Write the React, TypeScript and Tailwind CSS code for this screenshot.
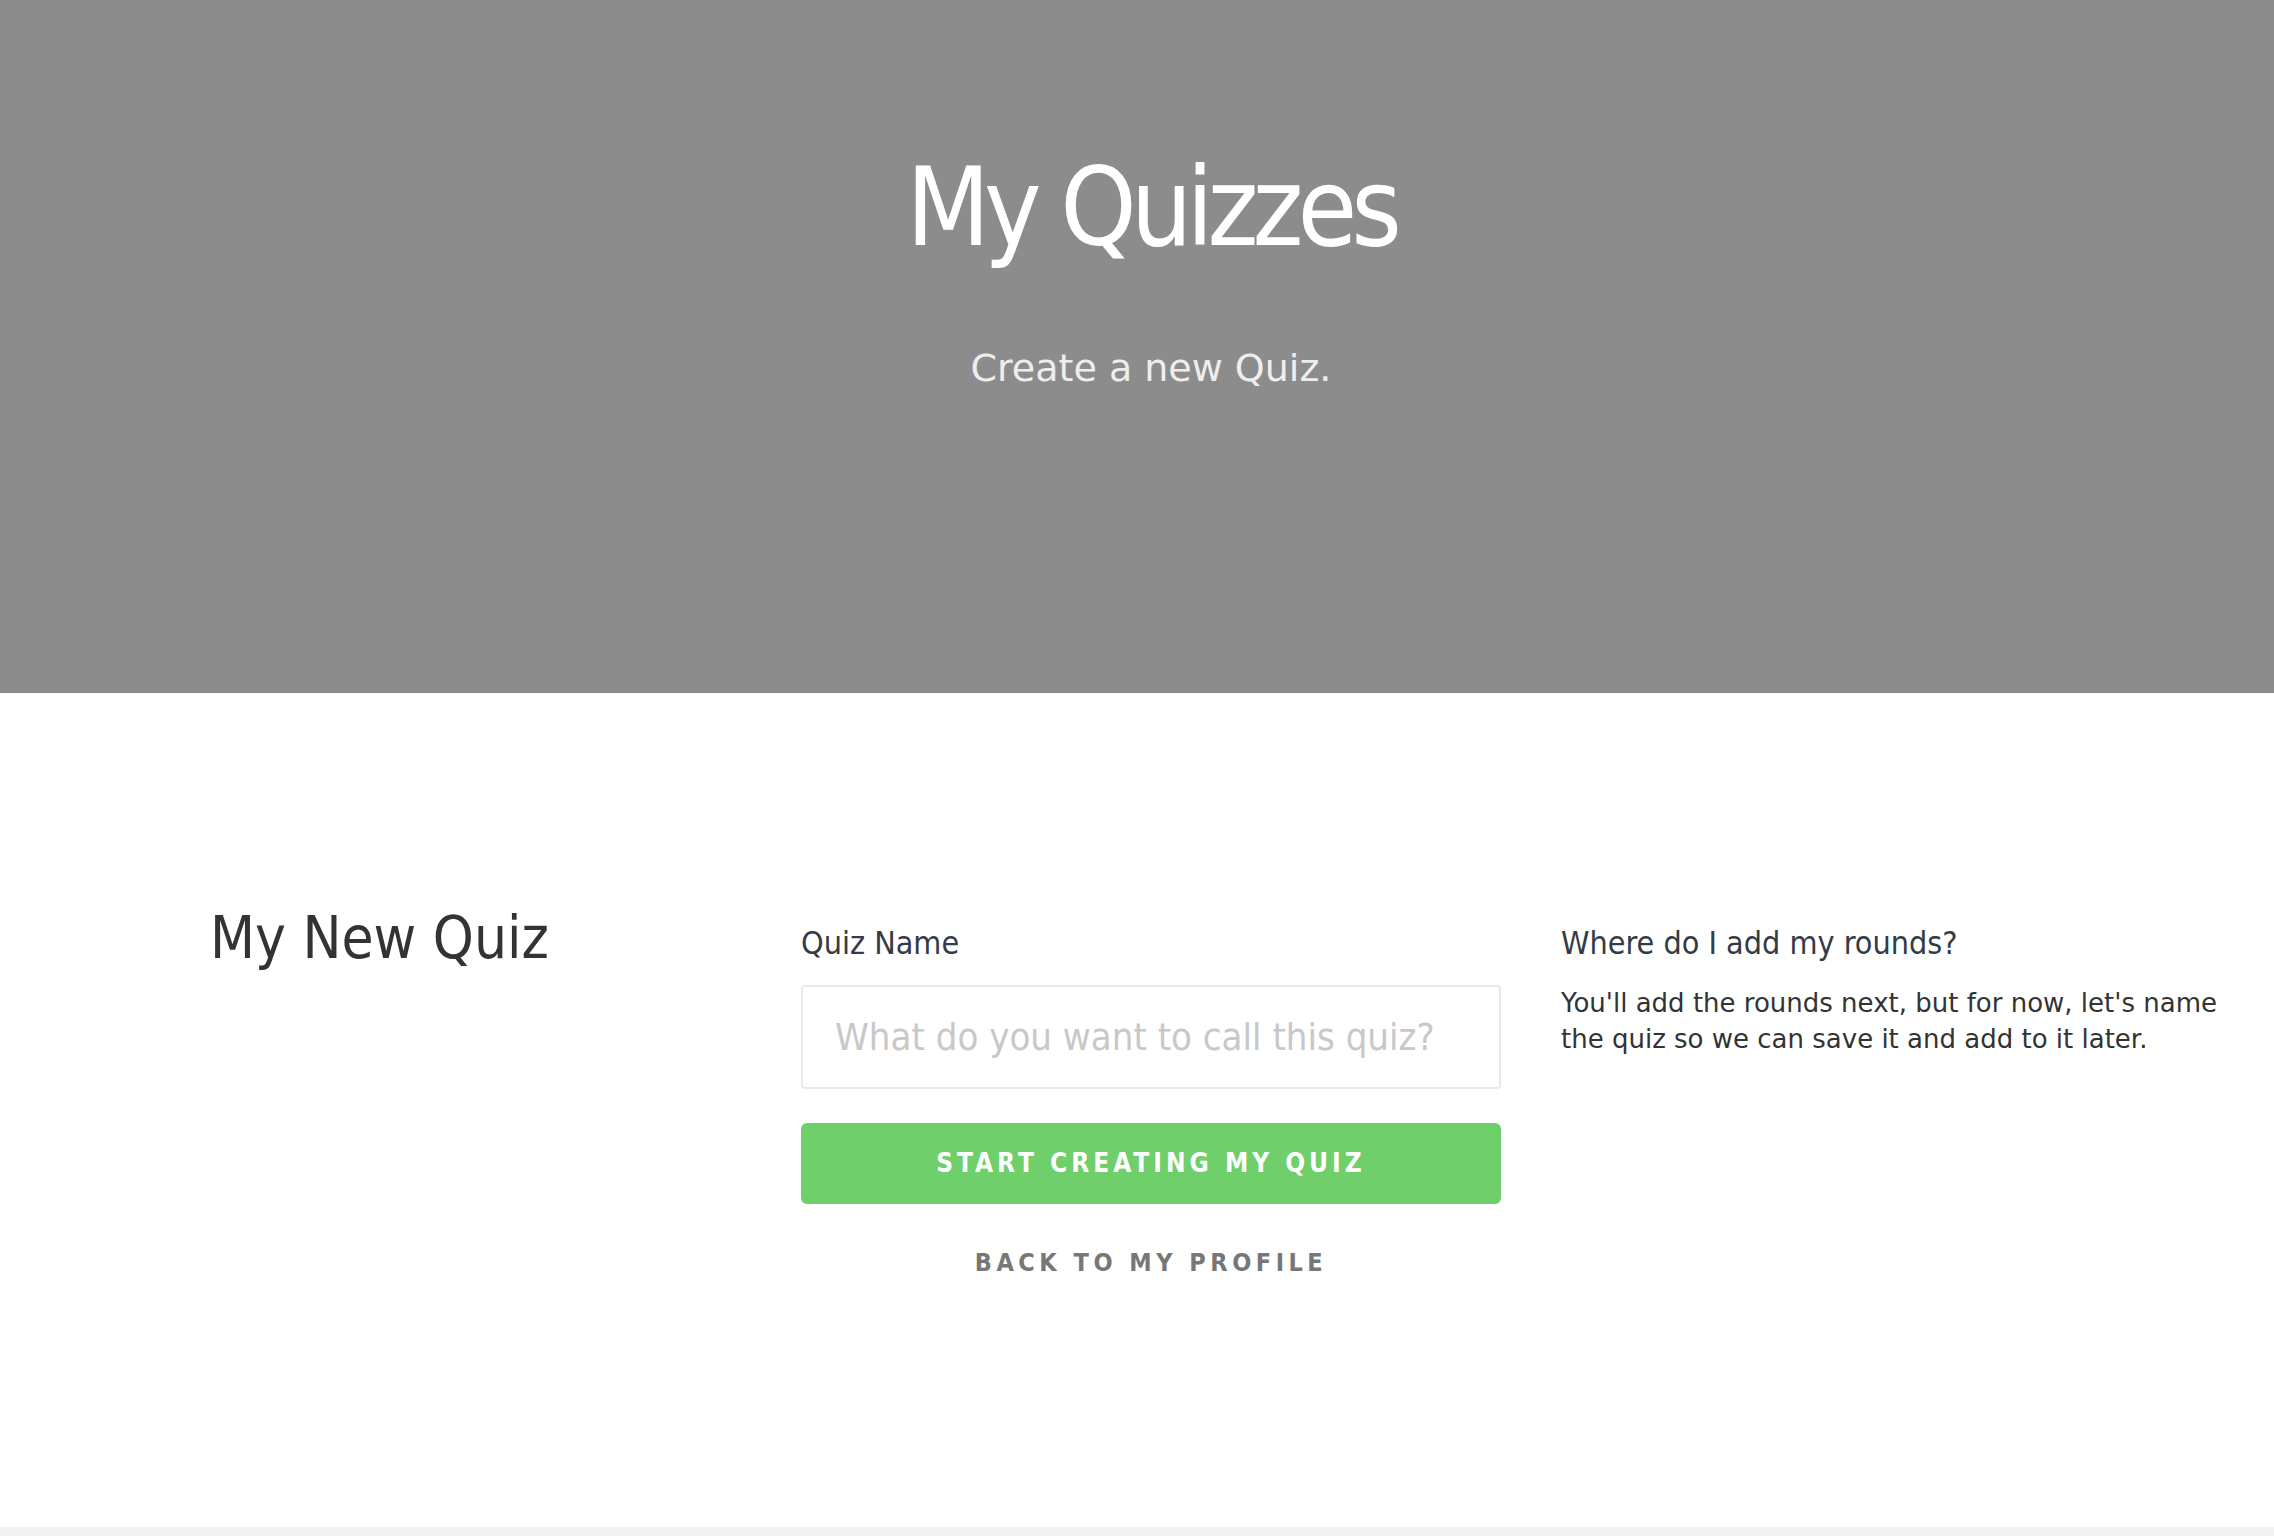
export default function App() {
  return (
    <div className="min-h-screen bg-white">
      {/* Hero */}
      <header className="h-[693px] bg-[#8c8c8c] pt-[154px] pl-[28px] text-center">
        <h1 className="font-['DejaVu_Sans_Condensed','DejaVu_Sans',sans-serif] [font-stretch:condensed] text-[108px] leading-none tracking-[-6px] text-white">
          My Quizzes
        </h1>
        <p className="mt-[87px] font-['DejaVu_Sans',sans-serif] text-[38px] leading-none text-[#eeeeee]">
          Create a new Quiz.
        </p>
      </header>

      {/* Form section */}
      <main className="h-[834px] pt-[216px]">
        <div className="ml-[210px] grid grid-cols-[531px_700px_680px] gap-x-[60px]">
          <div>
            <h2 className="font-['DejaVu_Sans_Condensed','DejaVu_Sans',sans-serif] [font-stretch:condensed] text-[58px] leading-none text-[#333333]">
              My New Quiz
            </h2>
          </div>

          <div className="pt-[16px]">
            <label className="block font-['DejaVu_Sans_Condensed','DejaVu_Sans',sans-serif] [font-stretch:condensed] text-[32px] leading-[36px] text-[#333c46]">
              Quiz Name
            </label>
            <input
              type="text"
              placeholder="What do you want to call this quiz?"
              className="mt-[24px] block h-[104px] w-full rounded-[4px] border-2 border-[#e8e9ec] bg-white px-[32px] font-['DejaVu_Sans_Condensed','DejaVu_Sans',sans-serif] [font-stretch:condensed] text-[38px] text-[#333] placeholder:text-[#c8c8c8] outline-none"
            />
            <button className="mt-[34px] flex h-[81px] w-full items-center justify-center rounded-[6px] bg-[#6fcf6a] font-['DejaVu_Sans_Condensed','DejaVu_Sans',sans-serif] [font-stretch:condensed] text-[26px] font-bold tracking-[4px] text-white">
              START CREATING MY QUIZ
            </button>
            <div className="mt-[40px] text-center">
              <a className="font-['DejaVu_Sans_Condensed','DejaVu_Sans',sans-serif] [font-stretch:condensed] text-[25px] font-bold tracking-[4.5px] text-[#777777]">
                BACK TO MY PROFILE
              </a>
            </div>
          </div>

          <div className="pt-[16px]">
            <h4 className="font-['DejaVu_Sans_Condensed','DejaVu_Sans',sans-serif] [font-stretch:condensed] text-[32px] leading-[36px] text-[#333c46]">
              Where do I add my rounds?
            </h4>
            <p className="mt-[24px] font-['DejaVu_Sans',sans-serif] text-[26px] leading-[36px] text-[#333333]">
              You'll add the rounds next, but for now, let's name the quiz so we can save it and add to it later.
            </p>
          </div>
        </div>
      </main>

      <footer className="h-[60px] bg-[#f2f2f2]" />
    </div>
  );
}
